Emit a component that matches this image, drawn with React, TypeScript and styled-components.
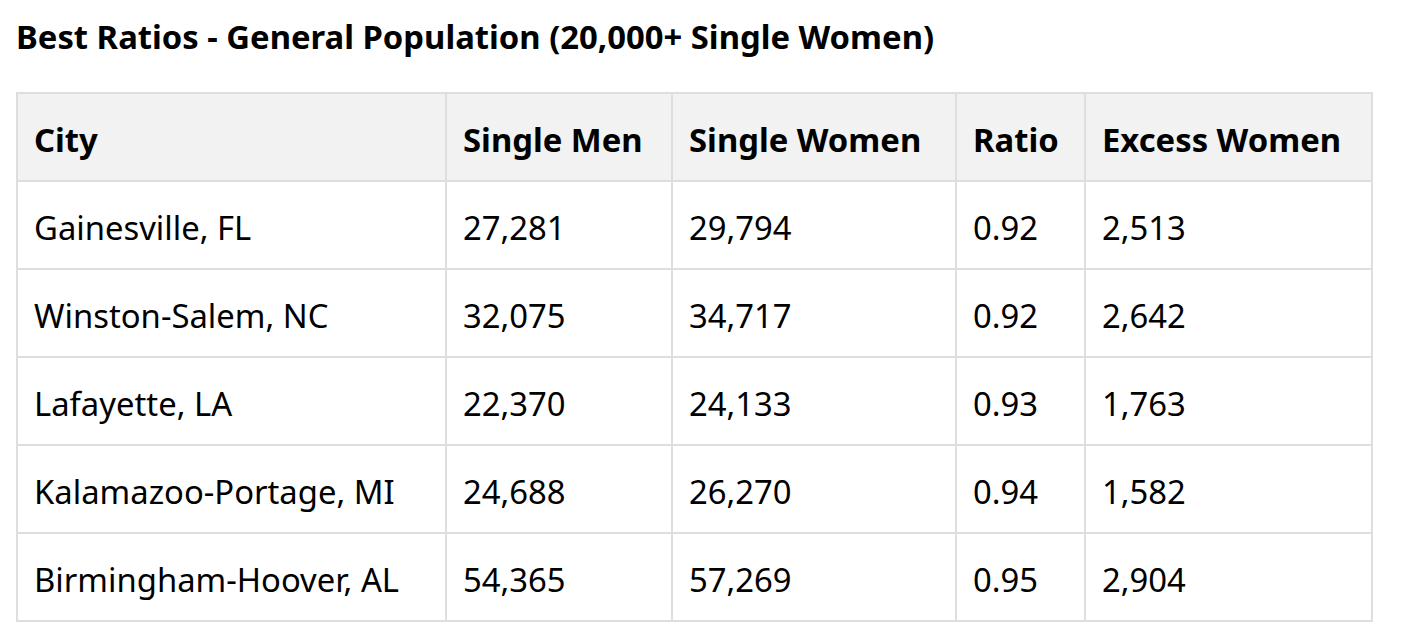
import React from "react";
import styled, { createGlobalStyle } from "styled-components";

const GlobalStyle = createGlobalStyle`
  html, body {
    margin: 0;
    padding: 0;
    background: #ffffff;
  }
  body {
    font-family: "Noto Sans", "Liberation Sans", sans-serif;
    color: #000000;
  }
`;

const Page = styled.main`
  padding: 15px 16px 0 16px;
`;

const Title = styled.h1`
  margin: 0 0 33px 0;
  font-size: 32.8px;
  line-height: 44px;
  font-weight: 700;
  color: #000000;
  letter-spacing: 0;
`;

const Table = styled.div`
  display: grid;
  grid-template-columns: 429px 226px 284px 129px 287px;
  width: max-content;
  border-left: 2px solid #dedede;
  border-top: 2px solid #dedede;
`;

const Cell = styled.div<{ $head?: boolean }>`
  display: flex;
  align-items: center;
  height: 88px;
  box-sizing: border-box;
  padding: 5px 16px 0 16px;
  border-right: 2px solid #dedede;
  border-bottom: 2px solid #dedede;
  background: ${(p) => (p.$head ? "#f2f2f2" : "#ffffff")};
  font-size: 32.8px;
  line-height: 44px;
  font-weight: ${(p) => (p.$head ? 700 : 400)};
  color: #000000;
  white-space: nowrap;
`;

const headers = ["City", "Single Men", "Single Women", "Ratio", "Excess Women"];

const rows: string[][] = [
  ["Gainesville, FL", "27,281", "29,794", "0.92", "2,513"],
  ["Winston-Salem, NC", "32,075", "34,717", "0.92", "2,642"],
  ["Lafayette, LA", "22,370", "24,133", "0.93", "1,763"],
  ["Kalamazoo-Portage, MI", "24,688", "26,270", "0.94", "1,582"],
  ["Birmingham-Hoover, AL", "54,365", "57,269", "0.95", "2,904"],
];

export default function App() {
  return (
    <Page>
      <GlobalStyle />
      <Title>Best Ratios - General Population (20,000+ Single Women)</Title>
      <Table role="table">
        {headers.map((h) => (
          <Cell key={h} $head role="columnheader">
            {h}
          </Cell>
        ))}
        {rows.map((r) =>
          r.map((v, i) => (
            <Cell key={r[0] + i} role="cell">
              {v}
            </Cell>
          ))
        )}
      </Table>
    </Page>
  );
}
